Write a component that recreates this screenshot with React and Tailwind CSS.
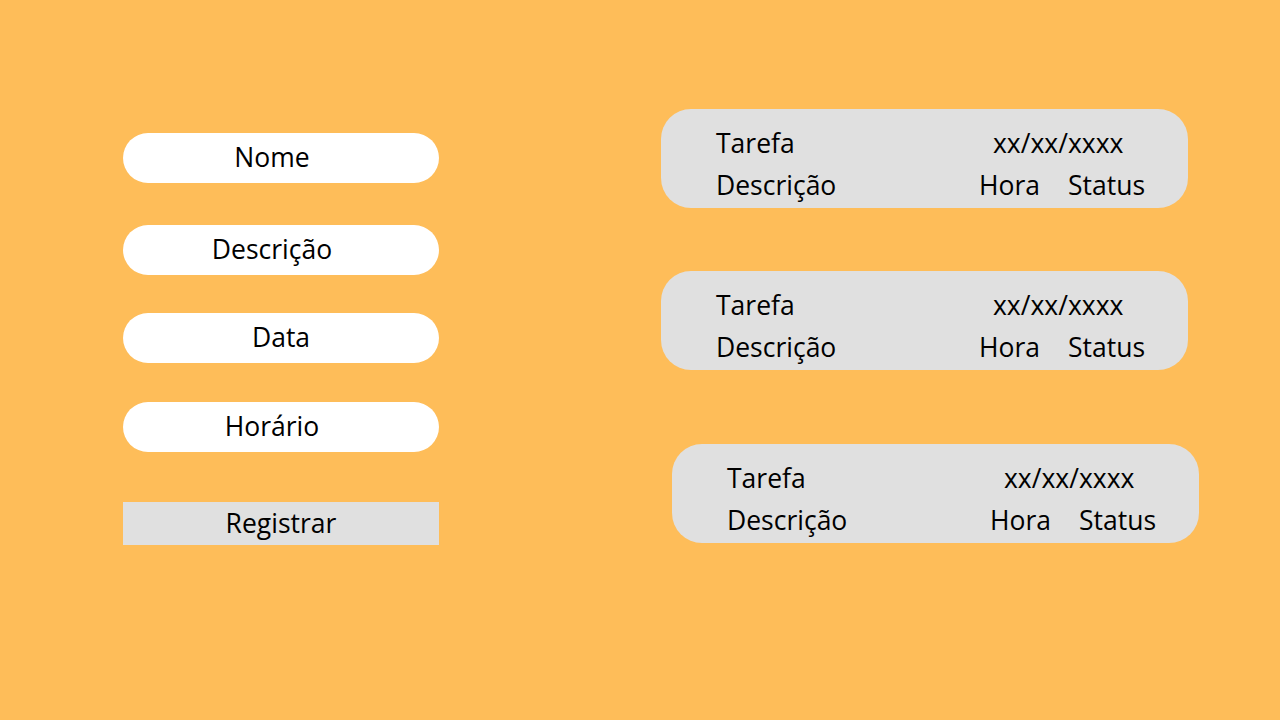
export default function App() {
  const fields = [
    { label: 'Nome', mt: 'mt-[133px]', shift: 'pr-[18px]' },
    { label: 'Descrição', mt: 'mt-[42px]', shift: 'pr-[18px]' },
    { label: 'Data', mt: 'mt-[38px]', shift: '' },
    { label: 'Horário', mt: 'mt-[39px]', shift: 'pr-[18px]' },
  ]
  const cards = ['mt-[109px] ml-0', 'mt-[63px] ml-0', 'mt-[74px] ml-[11px]']
  return (
    <div className="w-[1280px] h-[720px] bg-[#febd59] flex text-black text-[26.5px] overflow-hidden" style={{ fontFamily: '"Open Sans", sans-serif' }}>
      <div className="ml-[123px] flex flex-col w-[316px]">
        {fields.map((f) => (
          <div key={f.label} className={`${f.mt} h-[50px] rounded-full bg-white flex items-center justify-center ${f.shift}`}>
            {f.label}
          </div>
        ))}
        <button className="mt-[50px] h-[43px] bg-[#e0e0e0] flex items-center justify-center">Registrar</button>
      </div>
      <div className="ml-[222px] flex flex-col">
        {cards.map((c, i) => (
          <div key={i} className={`${c} w-[527px] h-[99px] rounded-[30px] bg-[#e0e0e0] pl-[55px] pt-[13px] leading-[42px]`}>
            <div className="flex">
              <span className="w-[277px]">Tarefa</span>
              <span>xx/xx/xxxx</span>
            </div>
            <div className="flex">
              <span className="w-[263px]">Descrição</span>
              <span className="w-[89px]">Hora</span>
              <span>Status</span>
            </div>
          </div>
        ))}
      </div>
    </div>
  )
}
